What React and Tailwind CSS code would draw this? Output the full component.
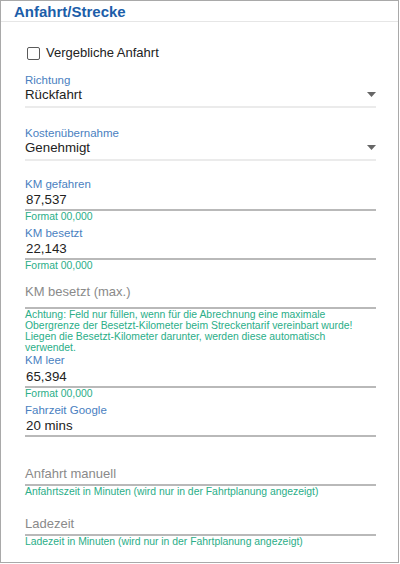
import React from "react";

const font = { fontFamily: '"Liberation Sans", Arial, sans-serif' };

const Arrow = () => (
  <svg width="9" height="5" viewBox="0 0 9 5">
    <path d="M0 0h9L4.5 5z" fill="#666" />
  </svg>
);

// select field with light underline
const SelectField = ({ label, value, mt }) => (
  <div className={mt}>
    <div className="text-[11.5px] leading-[14px] text-[#4a7fbf]">{label}</div>
    <div className="flex items-center justify-between border-b-2 border-[#ebebeb] pb-[4px]">
      <span className="text-[13.3px] leading-[15px] text-[#222]">{value}</span>
      <Arrow />
    </div>
  </div>
);

// filled input with label on top
const InputField = ({ label, value, mt, valueMt = "mt-[1px]", hint }) => (
  <div className={mt}>
    <div className="text-[11.5px] leading-[14px] text-[#4a7fbf]">{label}</div>
    <div className={`${valueMt} border-b-2 border-[#b9b9b9] pb-[1px] pl-[1px] text-[13.3px] leading-[16px] text-[#222]`}>
      {value}
    </div>
    {hint && <div className="text-[10.4px] leading-[12px] text-[#2aae88]">{hint}</div>}
  </div>
);

// empty input, placeholder only
const EmptyField = ({ placeholder, mt, pb, hint, hintClass = "leading-[12px]" }) => (
  <div className={mt}>
    <div className={`border-b-2 border-[#b9b9b9] ${pb} text-[13px] leading-[16px] text-[#8a8a8a]`}>
      {placeholder}
    </div>
    <div className={`text-[10.4px] ${hintClass} text-[#2aae88]`}>{hint}</div>
  </div>
);

export default function App() {
  return (
    <div style={font} className="w-[399px] h-[563px] border border-[#a9a9a9] bg-white overflow-hidden">
      {/* Header */}
      <div className="h-[21px] border-b border-[#e6e6e6] pt-[2px] pl-[13px]">
        <h1 className="text-[15px] leading-[18px] font-bold text-[#1c5ea9]">Anfahrt/Strecke</h1>
      </div>

      <div className="pl-[24px] pr-[22px]">
        {/* Checkbox */}
        <label className="mt-[23px] flex items-center h-[16px] pl-[2px]">
          <span className="w-[13px] h-[13px] border-[1.5px] border-[#5a5a5a] rounded-[2px] bg-white" />
          <span className="ml-[6px] text-[13px] leading-[16px] text-[#222]">Vergebliche Anfahrt</span>
        </label>

        <SelectField label="Richtung" value="Rückfahrt" mt="mt-[12px]" />
        <SelectField label="Kostenübernahme" value="Genehmigt" mt="mt-[18px]" />

        <InputField label="KM gefahren" value="87,537" mt="mt-[16px]" hint="Format 00,000" />
        <InputField label="KM besetzt" value="22,143" mt="mt-[3px]" hint="Format 00,000" />

        <EmptyField
          placeholder="KM besetzt (max.)"
          mt="mt-[12px]"
          pb="pb-[7px]"
          hintClass="leading-[11px]"
          hint="Achtung: Feld nur füllen, wenn für die Abrechnung eine maximale Obergrenze der Besetzt-Kilometer beim Streckentarif vereinbart wurde! Liegen die Besetzt-Kilometer darunter, werden diese automatisch verwendet."
        />

        <InputField label="KM leer" value="65,394" mt="mt-0" valueMt="mt-[2px]" hint="Format 00,000" />
        <InputField label="Fahrzeit Google" value="20 mins" mt="mt-[3px]" />

        <EmptyField
          placeholder="Anfahrt manuell"
          mt="mt-[29px]"
          pb="pb-[2px]"
          hint="Anfahrtszeit in Minuten (wird nur in der Fahrtplanung angezeigt)"
        />
        <EmptyField
          placeholder="Ladezeit"
          mt="mt-[18px]"
          pb="pb-[2px]"
          hint="Ladezeit in Minuten (wird nur in der Fahrtplanung angezeigt)"
        />
      </div>
    </div>
  );
}
